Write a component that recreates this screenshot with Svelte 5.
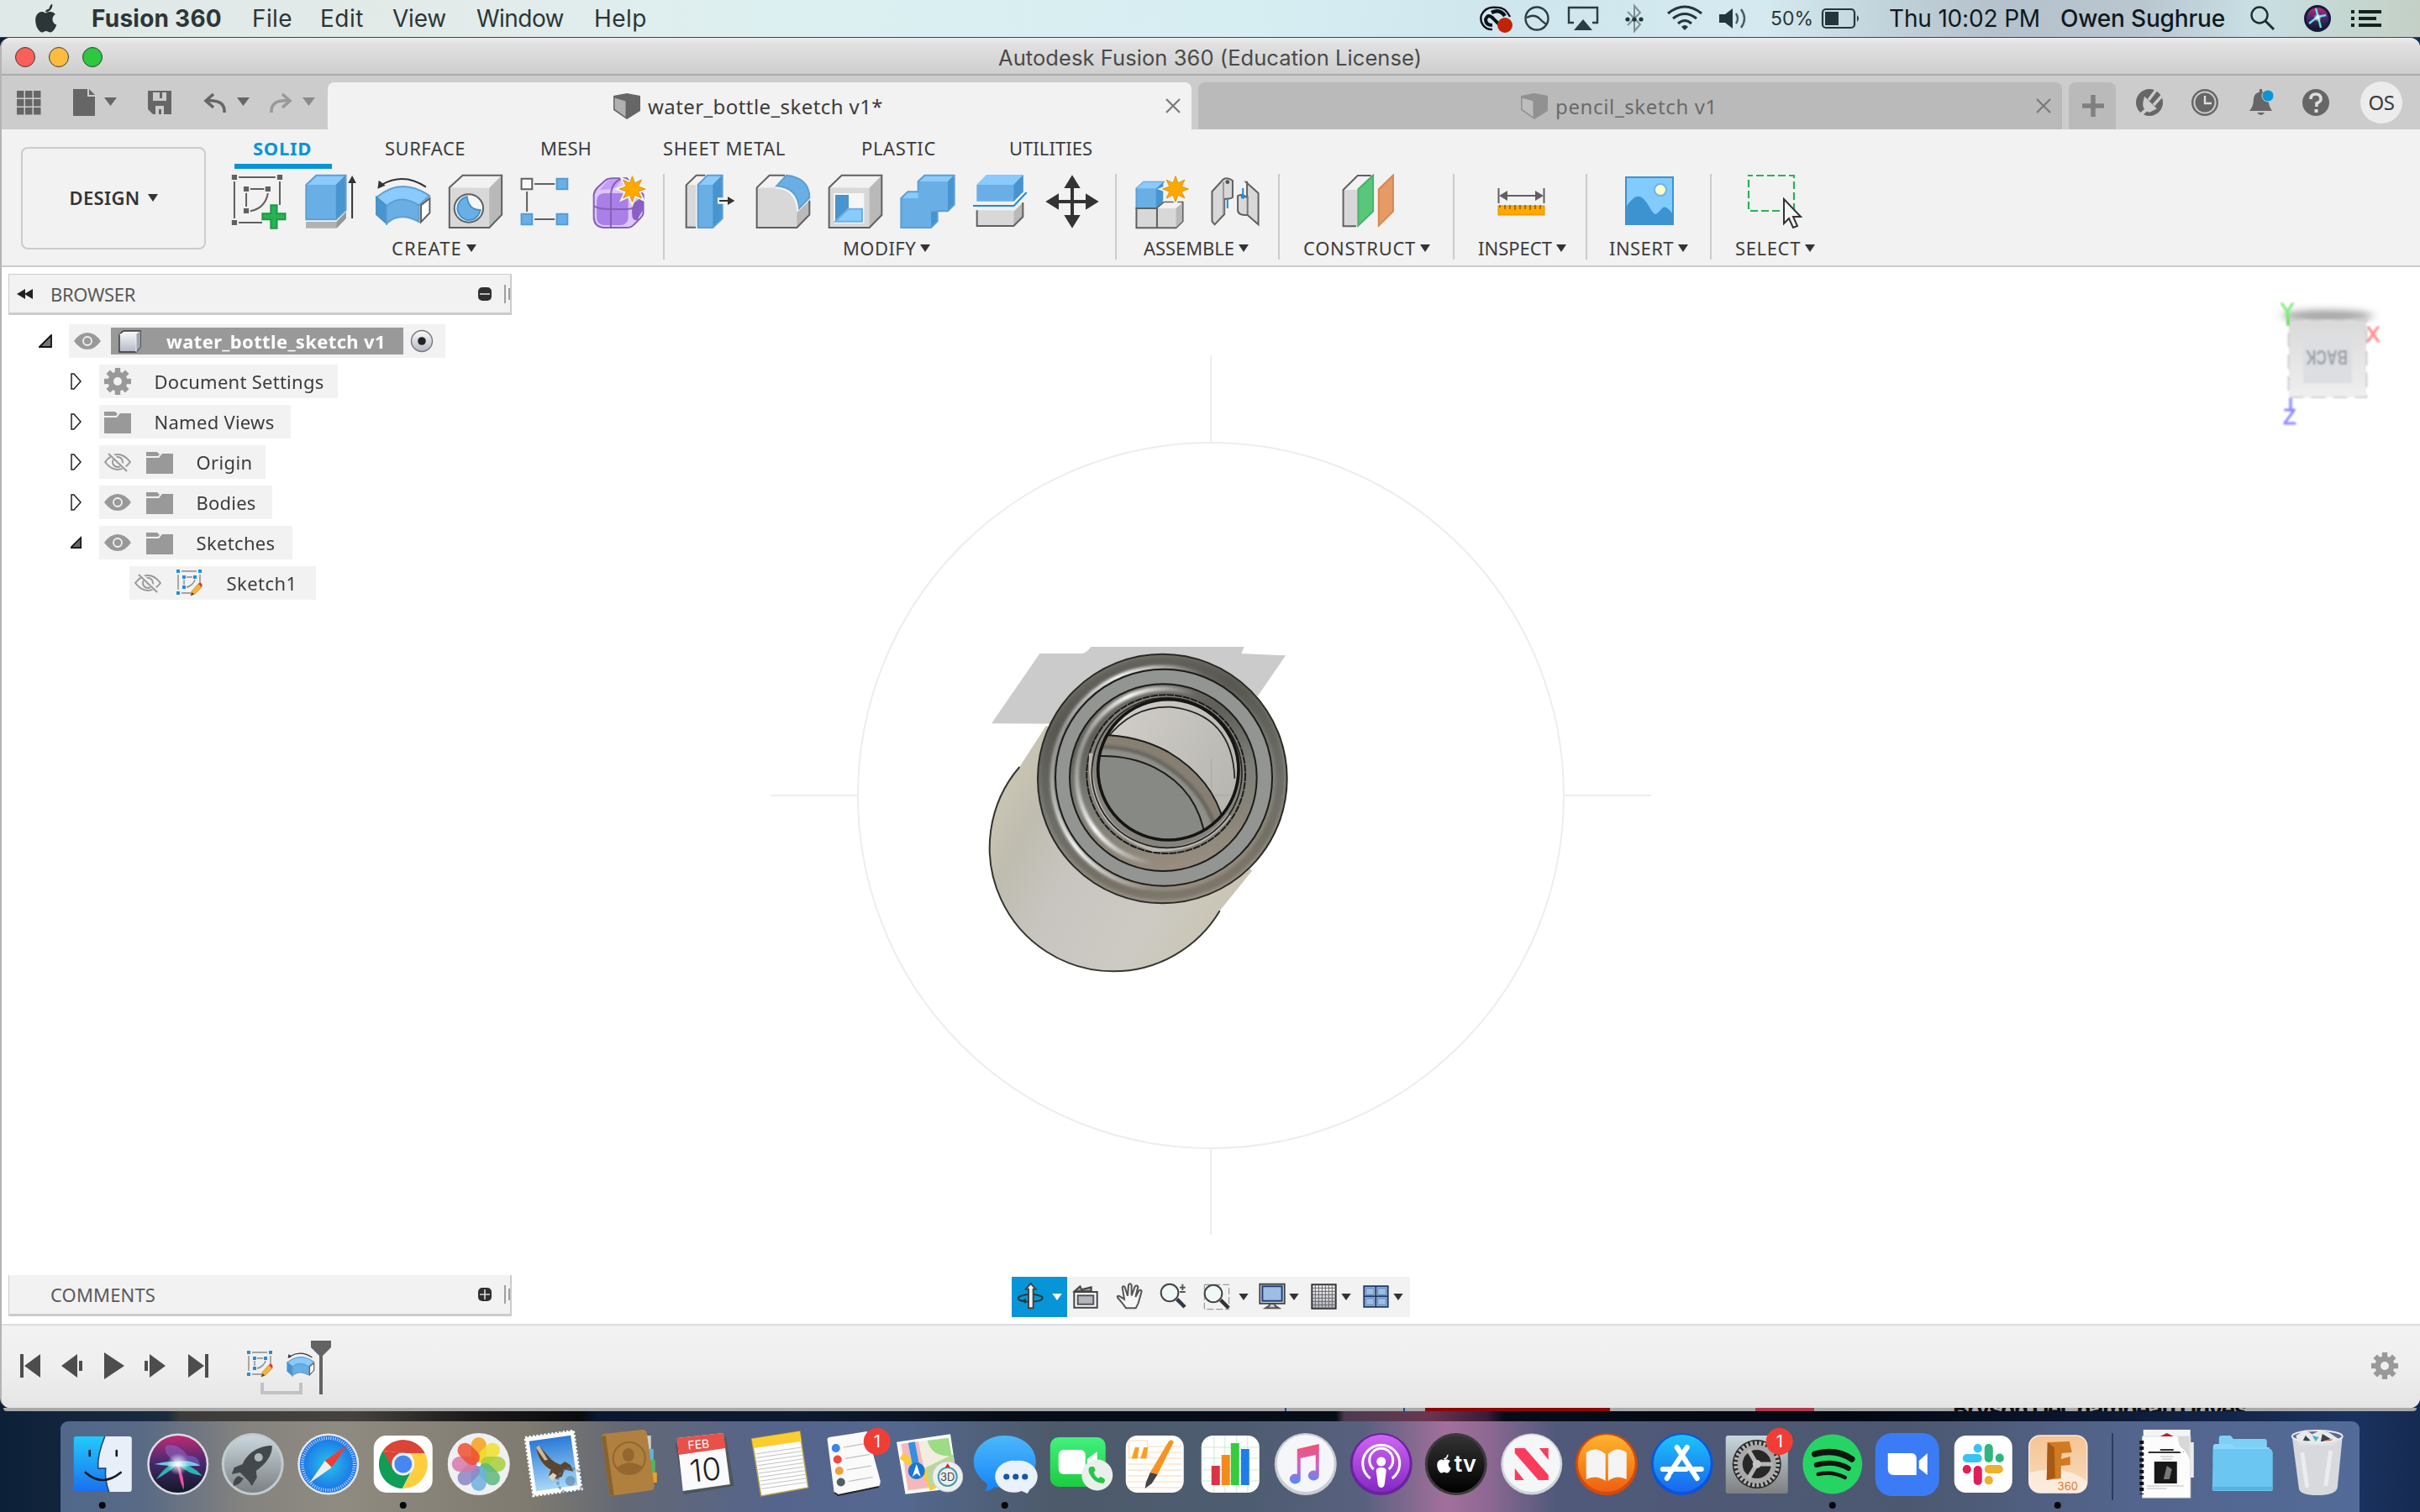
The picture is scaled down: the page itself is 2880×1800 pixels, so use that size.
<script>
  // Spreads letters so that a label takes exactly the given width.
  function fit(node, width) {
    const natural = node.getBoundingClientRect().width;
    node.style.letterSpacing = (width - natural) / node.textContent.length + 'px';
  }

  const menus = [
    { t: 'Fusion 360', gap: 39, w: 155, bold: true },
    { t: 'File', gap: 36, w: 48 },
    { t: 'Edit', gap: 33, w: 52 },
    { t: 'View', gap: 34, w: 64 },
    { t: 'Window', gap: 36, w: 104 },
    { t: 'Help', gap: 36, w: 63 }
  ];

  const ribbonTabs = [
    { t: 'SOLID', gap: 41, w: 70, on: true },
    { t: 'SURFACE', gap: 87, w: 96 },
    { t: 'MESH', gap: 89, w: 61 },
    { t: 'SHEET METAL', gap: 85, w: 146 },
    { t: 'PLASTIC', gap: 90, w: 89 },
    { t: 'UTILITIES', gap: 87, w: 99 }
  ];

  const groups = [
    { t: 'CREATE', x: 260, w: 531, gap: 206, lw: 84 },
    { t: 'MODIFY', x: 791, w: 538, gap: 212, lw: 87 },
    { t: 'ASSEMBLE', x: 1329, w: 194, gap: 32, lw: 108 },
    { t: 'CONSTRUCT', x: 1523, w: 208, gap: 28, lw: 134 },
    { t: 'INSPECT', x: 1731, w: 158, gap: 28, lw: 88 },
    { t: 'INSERT', x: 1889, w: 148, gap: 26, lw: 77 },
    { t: 'SELECT', x: 2037, w: 170, gap: 28, lw: 78 }
  ];

  const tree = [
    { t: 'Document Settings', arrow: 'closed', icons: ['gear'], w: 284, tw: 202 },
    { t: 'Named Views', arrow: 'closed', icons: ['folder'], w: 228, tw: 143 },
    { t: 'Origin', arrow: 'closed', icons: ['off', 'folder'], w: 198, tw: 67 },
    { t: 'Bodies', arrow: 'closed', icons: ['eye', 'folder'], w: 206, tw: 71 },
    { t: 'Sketches', arrow: 'open', icons: ['eye', 'folder'], w: 230, tw: 94 },
    { t: 'Sketch1', arrow: '', icons: ['off', 'sketch'], w: 222, tw: 84 }
  ];

  const apps = ['finder', 'siri', 'launchpad', 'safari', 'chrome', 'photos', 'mail', 'contacts', 'calendar',
    'notes', 'reminders', 'maps', 'messages', 'facetime', 'pages', 'numbers', 'music', 'podcasts', 'tv',
    'news', 'books', 'appstore', 'prefs', 'spotify', 'zoom', 'slack', 'fusion'];
  const running = ['finder', 'chrome', 'messages', 'spotify', 'fusion'];

  const range = (n) => Array.from({ length: n }, (_, i) => i);
  const petals = ['#f7a01c', '#f0e12c', '#a6cf3c', '#5cb87c', '#6cb0e0', '#8b86c4', '#d878a8', '#ee4f30'];
  const star = range(16)
    .map((i) => {
      const r = i % 2 ? 8 : 16;
      const a = (i * Math.PI) / 8;
      return `${(r * Math.sin(a)).toFixed(2)},${(-r * Math.cos(a)).toFixed(2)}`;
    })
    .join(' ');
</script>

{#snippet caret(color)}
  <svg class="caret" width="12" height="9" viewBox="0 0 12 9"><path d="M0 0H12L6 9Z" fill={color} /></svg>
{/snippet}

{#snippet gear(c)}
  <g fill={c}>
    {#each range(8) as i}
      <rect x="-3.2" y="-16" width="6.4" height="8" transform={`rotate(${i * 45})`} />
    {/each}
    <path fill-rule="evenodd" d="M0-11.5A11.5 11.5 0 1 1 0 11.5A11.5 11.5 0 1 1 0-11.5ZM0-5A5 5 0 1 0 0 5A5 5 0 1 0 0-5Z" />
  </g>
{/snippet}

{#snippet starburst(x, y)}
  <g transform={`translate(${x} ${y})`}>
    <polygon points={star} fill="#f2f2f2" stroke="#f2f2f2" stroke-width="4" />
    <polygon points={star} fill="#ffa900" stroke="#dd9100" stroke-width="1" transform="scale(.96)" />
  </g>
{/snippet}

{#snippet sketchArt()}
  <g fill="none" stroke="#8a8a8a" stroke-width="1.400">
    <path d="M2 6V24M6 2H24M28 6V20M6 28H17M12 9H19M9 12V18M12 21C17 20 21 16 22 12" />
  </g>
  <g fill="#1e90e0">
    <rect width="4" height="4" /><rect x="26" width="4" height="4" /><rect y="26" width="4" height="4" />
    <rect x="7" y="7" width="4" height="4" /><rect x="20" y="7" width="4" height="4" /><rect x="7" y="19" width="4" height="4" />
  </g>
  <path d="M18 26L26 17L30 21L22 29L17 31Z" fill="#f6b23c" stroke="#c98a1c" stroke-width=".8" />
  <path d="M26 17C28 14 32 17 30 21Z" fill="#e83030" /><path d="M17 31L18.5 27L21 29.5Z" fill="#444" />
{/snippet}

{#snippet revolveArt()}
  <path d="M575 135Q660 60 758 129L722 163Q660 125 610 166Z" fill="#8acafc" stroke="#5f9fd0" />
  <path d="M575 135L610 166V228L575 196Z" fill="#4794cf" stroke="#4a90c8" />
  <path d="M610 166Q660 120 722 165V222Q655 185 610 228Z" fill="#69afe6" stroke="#5f9fd0" />
  <path d="M729 163L759 138V190L729 223Z" fill="#fff" stroke="#5f5f5f" />
  <path d="M592 90Q670 44 746 98" fill="none" stroke="#333" /><path d="M579 104L583 74L606 92Z" fill="#333" />
{/snippet}

{#snippet createIcons()}
  <g class="hair" transform="translate(250 190) scale(.34439 .33333)">
    <path d="M99 63H226M84 78V210M241 78V162M99 225H180M139 105H187M125 119V168M200 120Q190 174 139 184" fill="none" stroke="#606060" />
    <g fill="#606060">
      <rect x="75" y="54" width="18" height="18" /><rect x="232" y="54" width="18" height="18" /><rect x="75" y="216" width="18" height="18" />
      <rect x="116" y="96" width="18" height="18" /><rect x="191" y="96" width="18" height="18" /><rect x="116" y="174" width="18" height="18" />
    </g>
    <path d="M210 163H231V193H260V214H231V245H210V214H181V193H210Z" fill="#26b354" stroke="#1c9a45" />

    <path d="M331 90L367 55H469V180L435 215H331Z" fill="#69afe6" />
    <path d="M331 90L367 55H469L435 90Z" fill="#8acafc" /><path d="M435 90L469 55V180L435 215Z" fill="#4794cf" />
    <path d="M332 90L367 56H469V180L435 214H332Z" fill="none" stroke="#5c9fd2" />
    <path d="M331 222H437L470 187V210L437 245H331Z" fill="#b2b2b2" /><path d="M437 222L470 187V210L437 245Z" fill="#989898" />
    <path d="M491 80V210" stroke="#333" /><path d="M477 84L491 57L505 84Z" fill="#333" />

    {@render revolveArt()}

    <path d="M827 100L873 56H1008V197L965 243H827Z" fill="#d8d8d8" />
    <path d="M827 100L873 56H1008L965 101Z" fill="#f2f2f2" /><path d="M965 101L1008 56V197L965 243Z" fill="#b9b9b9" />
    <path d="M827 100L873 56H1008V197L965 243H827Z" fill="none" stroke="#606060" />
    <circle cx="894" cy="174" r="50" fill="#f6f6f6" stroke="#606060" />
    <path d="M888 133Q893 180 934 180Q925 216 894 216A42 42 0 0 1 888 133Z" fill="#69afe6" stroke="#4794cf" />

    <path d="M1121 87H1191M1095 114V186M1121 213H1191" stroke="#606060" />
    <rect x="1076" y="68" width="37" height="38" fill="#fafafa" stroke="#606060" />
    <g fill="#69afe6" stroke="#539dd6">
      <rect x="1198" y="68" width="37" height="38" /><rect x="1076" y="194" width="37" height="38" /><rect x="1198" y="194" width="37" height="38" />
    </g>

    <path d="M1326 125Q1328 110 1340 98L1365 75Q1375 67 1390 67H1440L1497 125V190Q1497 200 1488 208L1465 232Q1455 243 1440 243H1360Q1326 240 1326 205Z" fill="#dcc6fa" stroke="#8461b5" />
    <path d="M1347 107L1372 78Q1385 68 1425 68L1400 100Q1390 108 1347 107Z" fill="#c59bfc" />
    <rect x="1336" y="120" width="109" height="114" rx="26" fill="#ab7fe8" />
    <path d="M1458 160L1496 130V180L1475 215Q1458 222 1458 190Z" fill="#8c5fc8" />
    <path d="M1326 165Q1340 177 1385 177H1440Q1470 176 1497 148M1385 243V130Q1385 85 1420 68M1475 217Q1480 190 1475 150" fill="none" stroke="#8461b5" />
  </g>
  {@render starburst(752.5, 225)}
{/snippet}

{#snippet modifyIcons()}
  <g class="hair" transform="translate(800 190) scale(.33333)">
    <path d="M50 242V91L86 56H118L84 91V242Z" fill="#d8d8d8" /><path d="M50 91L86 56H118L84 91Z" fill="#f2f2f2" />
    <path d="M84 242H50V91L86 56H118" fill="none" stroke="#606060" />
    <path d="M91 90L126 55H179V210L145 244H91Z" fill="#69afe6" /><path d="M91 90L126 55H179L145 90Z" fill="#8acafc" />
    <path d="M145 90L179 55V210L145 244Z" fill="#4794cf" /><path d="M92 90L126 56H179V210L145 243H92Z" fill="none" stroke="#5c9fd2" />
    <path d="M162 136H195V158H162Z" fill="#f2f2f2" /><path d="M168 147H202" stroke="#333" /><path d="M198 132L223 147L198 162Z" fill="#333" />

    <path d="M302 100H375Q440 110 447 190L445 243H302Z" fill="#d8d8d8" /><path d="M302 100L347 56H405L372 100Z" fill="#f2f2f2" />
    <path d="M445 190L490 146V197L445 243Z" fill="#b9b9b9" />
    <path d="M402 56H347L302 100V243H445L490 197V146" fill="none" stroke="#606060" />
    <path d="M372 95L408 56Q490 65 490 136L452 175Q450 100 372 95Z" fill="#69afe6" stroke="#5c9fd2" />
    <path d="M368 100Q444 104 448 182" fill="none" stroke="#f6f6f6" />

    <path d="M560 100L605 56H748V198L704 243H560Z" fill="#d8d8d8" /><path d="M560 100L605 56H748L704 101Z" fill="#f2f2f2" />
    <path d="M704 101L748 56V198L704 243Z" fill="#b9b9b9" /><path d="M560 100L605 56H748V198L704 243H560Z" fill="none" stroke="#606060" />
    <path d="M576 120H685V228H576Z" fill="#f6f6f6" /><path d="M582 126H630V174L582 221Z" fill="#4794cf" />
    <path d="M582 221L628 176H678V221Z" fill="#8acafc" stroke="#69afe6" />

    <path d="M817 138L841 115H878V78L901 55H1007V161L984 185H947V220L924 244H817Z" fill="#69afe6" />
    <path d="M817 138L841 115H878V138ZM878 78L901 55H1007L984 78Z" fill="#8acafc" />
    <path d="M984 78L1007 55V161L984 185ZM924 185H947V220L924 244Z" fill="#4794cf" />
    <path d="M817 138L841 115H878V78L901 56H1007V161L984 184H947V220L924 243H817Z" fill="none" stroke="#5c9fd2" />

    <path d="M1087 90L1122 55H1253V115L1219 149H1087Z" fill="#69afe6" /><path d="M1087 90L1122 55H1253L1219 90Z" fill="#8acafc" />
    <path d="M1219 90L1253 55V115L1219 149Z" fill="#4794cf" />
    <path d="M1088 181H1219V237H1088Z" fill="#d8d8d8" /><path d="M1219 185L1252 153V204L1219 237Z" fill="#b9b9b9" />
    <path d="M1088 181V237H1219L1252 204V153" fill="none" stroke="#606060" />
    <path d="M1074 165H1220L1265 117" fill="none" stroke="#178be0" />

    <path d="M1422 95H1434V144H1482V156H1434V205H1422V156H1374V144H1422Z" fill="#333" />
    <path d="M1399 102L1428 55L1457 102ZM1399 198L1428 245L1457 198ZM1380 121L1333 150L1380 179ZM1476 121L1523 150L1476 179Z" fill="#333" />
  </g>
{/snippet}

{#snippet assembleIcons()}
  <g class="hair" transform="translate(960 0) scale(.61224 .33333)">
    <path d="M641 744V673L655 650H693L680 673V744Z" fill="#69afe6" stroke="#5c9fd2" /><path d="M641 673L655 650H693L680 673Z" fill="#8acafc" />
    <path d="M680 673L693 650V720L680 744Z" fill="#4794cf" />
    <path d="M641 744H681V814H641ZM681 744L694 722H731V790L718 814H681Z" fill="#d8d8d8" stroke="#606060" />
    <path d="M682 744L695 724H730L718 744Z" fill="#f2f2f2" /><path d="M718 744L730 726V790L718 812Z" fill="#b9b9b9" />

    <path d="M788 684L810 640Q818 632 828 645V705Q822 712 812 710V765L793 802L788 790Z" fill="#d8d8d8" stroke="#606060" />
    <path d="M810 650V765" stroke="#9a9a9a" /><ellipse cx="818" cy="650" rx="4" ry="7" fill="#555" />
    <path d="M854 650L878 690V802L857 768Q838 770 838 750V700Q844 690 856 705V650Z" fill="#d8d8d8" stroke="#606060" />
    <path d="M857 700V765" stroke="#777" /><path d="M818 712V744M848 672V704" stroke="#178be0" /><ellipse cx="848" cy="703" rx="4" ry="7" fill="#178be0" />
  </g>
  {@render starburst(1399, 225)}
{/snippet}

{#snippet constructIcons()}
  <g class="hair" transform="translate(960 0) scale(.61224 .33333)">
    <path d="M1043 678L1071 627H1098L1070 678V808H1043Z" fill="#f2f2f2" /><path d="M1043 678H1070V808H1043Z" fill="#d8d8d8" />
    <path d="M1068 808H1043V678L1071 627H1097" fill="none" stroke="#606060" />
    <path d="M1072 676L1101 626V755L1072 806Z" fill="#5ac67c" stroke="#46b268" />
    <path d="M1112 676L1140 626V755L1112 806Z" fill="#e69a66" stroke="#d88652" />
  </g>
{/snippet}

{#snippet inspectIcons()}
  <path d="M1783.500 224V242M1837.500 224V242M1788 233H1833" stroke="#606060" stroke-width="2" />
  <path d="M1784 233L1794 227V239ZM1837 233L1827 227V239Z" fill="#606060" />
  <rect x="1783" y="245" width="55" height="11" fill="#ffa900" stroke="#dd9100" />
  <path d="M1785 244V247M1791 244V249M1797 244V249M1803 244V250M1809 244V249M1815 244V249M1821 244V250M1827 244V249M1833 244V249" stroke="#7a5a10" stroke-width="1.400" />
{/snippet}

{#snippet insertIcons()}
  <rect x="1935" y="211" width="56" height="56" fill="#82cbff" stroke="#3d93cf" stroke-width="2" />
  <circle cx="1976" cy="226" r="7" fill="#ffffc8" stroke="#6db4ea" stroke-width="2" />
  <path d="M1934 248C1942 236 1948 230 1955 236C1962 242 1966 254 1970 255C1975 254 1978 244 1983 247C1988 250 1990 254 1992 257V268H1934Z" fill="#3d93cf" />
{/snippet}

{#snippet selectIcons()}
  <rect x="2081" y="209" width="54" height="42" fill="none" stroke="#26b354" stroke-width="2.200" stroke-dasharray="9 4" stroke-dashoffset="4" />
  <path d="M2123 237V266L2129 260L2134 271L2139 269L2134 258H2143Z" fill="#f6f6f6" stroke="#333" stroke-width="2" />
{/snippet}

{#snippet cubeTab(edge, light, dark)}
  <svg class="tab-cube" width="32" height="31" viewBox="0 0 32 31">
    <path d="M0 3L16 0L32 3V21L16 31L0 20Z" fill={dark} /><path d="M1 5L15 9V29L1 19Z" fill={light} stroke={edge} />
  </svg>
{/snippet}

{#snippet rowIcon(kind)}
  <svg class="row-icon" width="32" height="32" viewBox="0 0 32 32">
    {#if kind === 'gear'}
      <g transform="translate(16 16)">{@render gear('#999')}</g>
    {:else if kind === 'folder'}
      <path d="M0 4H13L16 7L14 9H0Z" fill="#999" /><path d="M0 11H15L19 6H32V30H0Z" fill="#999" />
    {:else if kind === 'eye'}
      <path d="M0 16Q7 6 16 6T32 16Q25 26 16 26T0 16Z" fill="#999" /><circle cx="16" cy="16" r="5" fill="none" stroke="#f2f2f2" stroke-width="1.800" />
    {:else if kind === 'off'}
      <path d="M1 16Q8 7 16 7T31 16Q24 25 16 25T1 16Z" fill="none" stroke="#999" stroke-width="2" /><circle cx="16" cy="16" r="6" fill="none" stroke="#999" stroke-width="2" /><circle cx="16" cy="16" r="2" fill="#999" />
      <path d="M6 5L28 27" stroke="#f2f2f2" stroke-width="5" /><path d="M5 6L27 27" stroke="#999" stroke-width="2" />
    {:else}
      {@render sketchArt()}
    {/if}
  </svg>
{/snippet}

{#snippet app(name)}
  {#if name === 'finder'}
    <rect x="-34" y="-33" width="69" height="66" rx="3" fill="url(#finder)" />
    <path d="M3-33C-3-18-6-5-5 5H4C3 15 5 25 8 33H32Q35 33 35 30V-30Q35-33 32-33Z" fill="#e9eff8" />
    <path d="M3-33C-3-18-6-5-5 5H4C3 15 5 25 8 33" fill="none" stroke="#1a3f78" stroke-width="1.500" />
    <path d="M-15-16V-10M17-16V-10" stroke="#151a22" stroke-width="2.600" stroke-linecap="round" />
    <path d="M-20 10Q0 28 22 10" fill="none" stroke="#151a22" stroke-width="2.600" stroke-linecap="round" />
  {:else if name === 'siri'}
    <circle r="36.500" fill="#dcdde2" /><circle r="34" fill="url(#siri)" />
    <path d="M0 0Q-10-4-26 18Q-14 12 0 0ZM0 0Q14-2 29 14Q12 12 0 0Z" fill="#2ad8c8" opacity=".8" />
    <path d="M0 0Q-20-14-14-22Q0-26 12-10Q26-10 26 2Q14-4 0 0Z" fill="#8a70d8" opacity=".5" />
    <path d="M0 0Q8 14 7 31Q0 16 0 0Z" fill="#ff5ab0" opacity=".9" /><path d="M-28 0Q-10-4 0-3Q14-6 27 2Q12 2 0 3Q-12 2-28 0Z" fill="#7ff0f8" opacity=".8" /><circle r="13" fill="url(#glow)" />
  {:else if name === 'launchpad'}
    <circle r="37" fill="#c2cacd" /><circle r="34" fill="url(#launch)" />
    <path d="M23-22C6-22-7-12-12 0L-22 4L-25 12L-15 10L-5 20L-1 26L5 16L4 8C16 0 24-12 23-22Z" fill="#43484c" /><circle cx="7" cy="-8" r="5" fill="#aeb8bc" /><path d="M-17 14Q-24 18-23 26Q-14 24-11 17Z" fill="#43484c" />
  {:else if name === 'safari'}
    <circle r="36.500" fill="#e6e8ea" /><circle r="34" fill="url(#safari)" /><circle r="31" fill="none" stroke="#e8f8ff" stroke-width="4" stroke-dasharray="1 1.700" opacity=".8" />
    <path d="M23-23L4 4L-4-4Z" fill="#f03c32" /><path d="M-23 23L4 4L-4-4Z" fill="#eee" />
  {:else if name === 'chrome'}
    <rect x="-35" y="-34" width="70" height="68" rx="15" fill="#fff" />
    <path d="M-24-16A29 29 0 0 1 26-13L0-13Z" fill="#db4437" /><path d="M-24-16A29 29 0 0 0-1 29L11 6L-9 8Z" fill="#0f9d58" /><path d="M26-13A29 29 0 0 1-1 29L12 6Q16-4 8-13Z" fill="#ffcd40" />
    <path d="M-24-16L-12 7L0-13Z" fill="#db4437" /><circle r="13.500" fill="#f1f1f1" /><circle r="10.500" fill="#4688f1" />
  {:else if name === 'photos'}
    <circle r="37" fill="#eef0f2" />
    {#each petals as p, i}<rect x="-9" y="-32" width="18" height="30" rx="9" fill={p} opacity=".85" transform={`rotate(${i * 45})`} />{/each}
    <circle r="2.500" fill="#fff" />
  {:else if name === 'mail'}
    <g transform="rotate(-8)"><rect x="-29" y="-36" width="58" height="70" fill="#fff" stroke="#fff" stroke-width="3" stroke-dasharray="2.500 2" /><rect x="-25" y="-31" width="50" height="60" fill="url(#mailsky)" />
      <path d="M-18-22L-14-25L-10-18L-2-6L2-2L8 2L14-1L20 4L22 12L12 8L8 16L0 18L-2 12L-8 14L-4 6Q-16-2-18-22Z" fill="#5a4530" /><path d="M-18-22L-14-25L-6-6L-10-6Z" fill="#c9b89a" /><path d="M-8 14L-2 10L2 14L-4 20Z" fill="#e0d4b8" /></g>
    <circle cx="20" cy="20" r="15" fill="none" stroke="#4d6e92" stroke-width="3" opacity=".5" stroke-dasharray="4 2" /><circle cx="20" cy="20" r="6" fill="#4d6e92" opacity=".5" />
  {:else if name === 'contacts'}
    <path d="M20-34L26-34V-18H20Z" fill="#cfcfcf" /><path d="M20-18H29V-5H20Z" fill="#58b8dc" /><path d="M20-5H31V10H20Z" fill="#52b466" /><path d="M20 10H33V22H20Z" fill="#f0a028" />
    <path d="M-33-33Q-33-35-30-36L16-41Q20-41 21-37L30 26Q30 30 27 31L-23 38Z" fill="#b0803f" /><path d="M-33-33L-28-34L-18 37L-23 38Z" fill="#8a6230" />
    <circle cx="0" cy="-7" r="19" fill="none" stroke="#93672f" stroke-width="2" /><ellipse cx="-1" cy="-11" rx="7" ry="8" fill="#93672f" /><path d="M-16 5Q0-8 17 4Q2 18-16 5Z" fill="#93672f" />
  {:else if name === 'calendar'}
    <path d="M-34-25L26-33L36 26L-24 36Z" fill="#4d565c" /><path d="M-32-31L23-37L31 24L-25 32Z" fill="#fafafa" /><path d="M-32-31L23-37L26-19L-30-11Z" fill="#e8504a" />
    <text x="-4" y="-19" class="a mid" font-size="14" fill="#fff" transform="rotate(-6)">FEB</text><text x="1" y="20" class="a mid" font-size="37" font-weight="300" fill="#222" transform="rotate(-6)">10</text>
  {:else if name === 'notes'}
    <path d="M-33-30L24-39L34 28L-22 38Z" fill="#fdfdfd" stroke="#b8a24a" stroke-width="1.500" /><path d="M-33-30L24-39L26-27L-31-19Z" fill="#fccd2e" />
    {#each range(10) as i}<path d={`M${-29 + i * 0.8} ${-12 + i * 4.6}L${26 + i * 0.8} ${-20 + i * 4.6}`} stroke="#c4c4c4" stroke-width="1" />{/each}
  {:else if name === 'reminders'}
    <path d="M-32-28Q-33-31-30-32L15-39L31 20Q31 26 27 28L-19 37Q-23 37-24 34Z" fill="#fafafa" /><path d="M-24 34L-19 37L29 27" stroke="#222" stroke-width="2" fill="none" />
    {#each ['#3c82f0', '#f04a3c', '#f0a040', '#555c66'] as c, i}<circle cx={-22 + i * 2} cy={-19 + i * 13.5} r="5" fill={c} /><path d={`M${-13 + i * 2} ${-20 + i * 13.5}L${16 + i * 2} ${-25 + i * 13.5}`} stroke="#bbb" stroke-width="1.200" />{/each}
    <circle cx="27" cy="-27" r="16" fill="#f23d37" /><text x="27" y="-20" class="a mid" font-size="20" fill="#fff">1</text>
  {:else if name === 'maps'}
    <path d="M-38-25L23-34L32 27L-28 34Z" fill="#f2ede0" stroke="#fff" stroke-width="3" /><path d="M-34-24L-14-27L-2 28L-26 31Z" fill="#f4b8bc" /><path d="M-3-28L22-31L26-10Q2-8-3-28Z" fill="#9cdc84" />
    <path d="M-34-10L-5 10L4 30" stroke="#fccb38" stroke-width="8" fill="none" /><path d="M-5 4L28-12L30 8L0 28Z" fill="#b8d89a" /><path d="M-22-26L-16 5" stroke="#3490e0" stroke-width="8" />
    <circle cx="-16" cy="8" r="10" fill="#1478d8" /><path d="M-16 0L-11 15L-16 11L-21 15Z" fill="#fff" />
    <circle cx="21" cy="15" r="18" fill="#eceff0" stroke="#c8cccf" /><circle cx="21" cy="15" r="11" fill="none" stroke="#4c98ac" stroke-width="2" /><text x="21" y="20" class="a mid" font-size="13" fill="#444">3D</text><path d="M21-1L24 4H18Z" fill="#e02020" />
  {:else if name === 'messages'}
    <path d="M0-34C20-34 37-21 37-3S20 28 0 28Q-8 28-12 27Q-16 32-24 32Q-20 27-21 23C-31 17-37 7-37-3C-37-21-20-34 0-34Z" fill="url(#msg)" />
    <path d="M13-4A22 19 0 0 1 30 30L27 35L20 32A22 19 0 1 1 13-4Z" fill="#e9f1fa" /><g fill="#1756a4"><circle cx="2" cy="15" r="3.600" /><circle cx="13" cy="15" r="3.600" /><circle cx="24" cy="15" r="3.600" /></g>
  {:else if name === 'facetime'}
    <rect x="-36" y="-32" width="66" height="59" rx="10" fill="url(#green)" /><rect x="-26" y="-17" width="32" height="29" rx="6" fill="#fff" /><path d="M8-6L20-15V10L8 2Z" fill="#fff" />
    <circle cx="20" cy="13" r="18.500" fill="#e9f0ea" /><path d="M12 3Q8 5 11 12Q17 23 27 23Q31 20 28 17L24 15L21 17Q17 14 16 10L18 7L16 3Z" fill="#22c84a" />
  {:else if name === 'pages'}
    <rect x="-35" y="-34" width="69" height="68" rx="14" fill="#fff" />{#each range(8) as i}<path d={`M-33 ${-21 + i * 7}H32`} stroke="#f8d9b4" stroke-width="1.200" />{/each}
    <rect x="-31" y="-28" width="22" height="20" fill="#fff" stroke="#f8d9b4" /><text x="-19" y="11" class="a mid" font-size="42" font-weight="800" fill="#f6a11c">“</text>
    <path d="M16-27Q20-31 22-26L3 12L-6 10Z" fill="#f79421" /><path d="M-6 10L3 12L-4 23L-12 29L-11 22Z" fill="#444" />
  {:else if name === 'numbers'}
    <rect x="-35" y="-34" width="69" height="68" rx="14" fill="#fff" /><path d="M-20-34V34M-7-34V34M7-34V34M20-34V34M-35-20H34M-35-7H34M-35 7H34M-35 20H34" stroke="#c5efcb" />
    <rect x="-23" y="2" width="10" height="23" fill="#dc3346" /><rect x="-11" y="-11" width="10" height="36" fill="#f58a1c" /><rect x="0" y="-25" width="10" height="50" fill="#36cc3c" /><rect x="12" y="-18" width="10" height="43" fill="#1e7ee8" />
  {:else if name === 'music'}
    <circle r="37" fill="#c9cdd4" /><circle cy="-1" r="34" fill="#f5f6fa" /><path d="M-10-18L16-24V13A6.500 6 0 1 1 12 8V-11L-6-7V17A6.500 6 0 1 1-10 12Z" fill="url(#music)" />
  {:else if name === 'podcasts'}
    <circle r="37" fill="#6b22a0" /><circle cy="-1" r="34" fill="url(#pod)" /><g fill="none" stroke="#fff" stroke-width="3"><path d="M-13 17A22 22 0 1 1 13 17" /><path d="M-9 6A14 14 0 1 1 9 6" /></g><circle cy="-3" r="5.500" fill="#fff" /><path d="M-6 8Q-6 4 0 4T6 8L4 24Q3 28 0 28T-4 24Z" fill="#fff" />
  {:else if name === 'tv'}
    <circle r="37" fill="#3c3c3c" /><circle r="34" fill="url(#tv)" /><g transform="translate(-14 -1) scale(.66)">{@render appleMark('#fff')}</g><text x="-2" y="9" class="a" font-size="27" font-weight="600" fill="#fff" textLength="26">tv</text>
  {:else if name === 'news'}
    <circle r="36.500" fill="#cfd5da" /><circle cy="-1" r="34" fill="#f4f6f8" /><path d="M-20-19H-8L20 13V19H8L-20-13ZM9-19H20V-5ZM-20 5V19H-9Z" fill="#fa3c5c" />
  {:else if name === 'books'}
    <circle r="37" fill="#d34a0c" /><circle cy="-1" r="34" fill="url(#books)" /><path d="M-1-12Q-12-22-24-14V18Q-12 12-1 20ZM2-12Q12-22 24-14V18Q12 12 2 20Z" fill="#f4f4f4" />
  {:else if name === 'appstore'}
    <circle r="37" fill="#0b55d8" /><circle cy="-1" r="34" fill="url(#store)" /><path d="M-6-20L18 17M6-20L-14 10M-16 14L-18 17M-23 6H5M15 6H23" stroke="#fff" stroke-width="6" stroke-linecap="round" />
  {:else if name === 'prefs'}
    <rect x="-37" y="-34" width="74" height="69" rx="3" fill="url(#launch)" /><circle r="29" fill="#282828" /><circle r="25" fill="none" stroke="#b4b4b4" stroke-width="5" stroke-dasharray="3 2.200" /><circle r="20" fill="none" stroke="#a8a8a8" stroke-width="6" /><path d="M0 0L19 0M0 0L-10-17M0 0L-10 17" stroke="#b6b6b6" stroke-width="5" /><circle r="5" fill="#c4c4c4" />
    <circle cx="27" cy="-27" r="16" fill="#f23d37" /><text x="27" y="-20" class="a mid" font-size="20" fill="#fff">1</text>
  {:else if name === 'spotify'}
    <circle r="35.500" fill="#26d464" /><g fill="none" stroke="#101510" stroke-linecap="round"><path d="M-21-12Q4-19 23-6" stroke-width="7.500" /><path d="M-19 1Q2-5 19 5" stroke-width="6" /><path d="M-17 12Q0 8 15 16" stroke-width="4.500" /></g>
  {:else if name === 'zoom'}
    <rect x="-38" y="-37" width="76" height="75" rx="20" fill="#3b7cf6" /><path d="M-23-13H5Q11-13 11-6V13H-16Q-23 13-23 6Z" fill="#fff" /><path d="M14-4L24-13V13L14 5Z" fill="#fff" />
  {:else if name === 'slack'}
    <rect x="-34" y="-34" width="69" height="68" rx="14" fill="#fff" /><g stroke-width="10" stroke-linecap="round">
      <path d="M-19-7H-6" stroke="#38c4f0" /><path d="M7-19V-7" stroke="#2eb67d" /><path d="M7 6H19" stroke="#ecb22e" /><path d="M-6 7V20" stroke="#e01e5a" />
      <path d="M-6-18.500V-19" stroke="#38c4f0" /><path d="M20-7V-7.500" stroke="#2eb67d" /><path d="M7 19V19.500" stroke="#ecb22e" /><path d="M-19 6V6.500" stroke="#e01e5a" /></g>
  {:else if name === 'fusion'}
    <rect x="-34" y="-34" width="69" height="68" rx="13" fill="url(#fus)" stroke="#fbeada" stroke-width="1.500" /><path d="M-34 10Q10 0 34 20V28Q30 34 20 34H-20Q-34 32-34 20Z" fill="#fdf1e6" opacity=".75" />
    <path d="M-12-26L14-27L17-14L5-13L4-6L15-9V1L4 2V17L-13 19Z" fill="#d07a24" /><path d="M-12-26L-4-20L-3 16L-13 19Z" fill="#a85a14" /><text x="12" y="31" class="a mid" font-size="13" fill="#d8782c">360</text>
  {/if}
{/snippet}

{#snippet appleMark(c)}
  <path d="M6-17Q7-23 11-25Q12-19 8-15T0-12Q-1-15 6-17ZM0-10Q4-13 9-12Q14-11 16-8Q10-4 12 3Q13 7 18 9Q13 21 8 21Q5 21 2 19Q-1 19-4 21Q-9 22-14 12Q-18 0-14-7Q-10-13-4-12Z" transform="translate(-1 2) scale(.74)" fill={c} />
{/snippet}

<svg class="defs" width="0" height="0">
  <defs>
    <linearGradient id="finder" x2="0" y2="1"><stop stop-color="#22cbfa" /><stop offset="1" stop-color="#1b6ff0" /></linearGradient>
    <linearGradient id="siri" x2="0" y2="1"><stop stop-color="#c02a72" /><stop offset=".45" stop-color="#4a2a70" /><stop offset="1" stop-color="#101828" /></linearGradient>
    <radialGradient id="glow"><stop stop-color="#fff" /><stop offset="1" stop-color="#fff" stop-opacity="0" /></radialGradient>
    <linearGradient id="launch" x2="0" y2="1"><stop stop-color="#c9d7dd" /><stop offset="1" stop-color="#7c8082" /></linearGradient>
    <radialGradient id="safari"><stop stop-color="#28c4ec" /><stop offset="1" stop-color="#1b6fe6" /></radialGradient>
    <linearGradient id="mailsky" x2="0" y2="1"><stop stop-color="#2a7ad8" /><stop offset="1" stop-color="#a8d8f6" /></linearGradient>
    <linearGradient id="msg" x2="0" y2="1"><stop stop-color="#4cb8fa" /><stop offset="1" stop-color="#1584fa" /></linearGradient>
    <linearGradient id="green" x2="0" y2="1"><stop stop-color="#42f07e" /><stop offset="1" stop-color="#1ccc40" /></linearGradient>
    <linearGradient id="music" x2="0" y2="1"><stop stop-color="#f0506c" /><stop offset=".5" stop-color="#d860c0" /><stop offset="1" stop-color="#4f8cfa" /></linearGradient>
    <linearGradient id="pod" x2="0" y2="1"><stop stop-color="#cf66f2" /><stop offset="1" stop-color="#8428c4" /></linearGradient>
    <linearGradient id="tv" x2="0" y2="1"><stop stop-color="#333" /><stop offset="1" stop-color="#000" /></linearGradient>
    <linearGradient id="books" x2="0" y2="1"><stop stop-color="#fdb42c" /><stop offset="1" stop-color="#ee6010" /></linearGradient>
    <linearGradient id="store" x2="0" y2="1"><stop stop-color="#1cc4fa" /><stop offset="1" stop-color="#1a66f0" /></linearGradient>
    <linearGradient id="fus" x2="0" y2="1"><stop stop-color="#f6c493" /><stop offset="1" stop-color="#f8dcc0" /></linearGradient>
    <linearGradient id="steel" x2="0" y2="1"><stop stop-color="#fbfbfc" /><stop offset="1" stop-color="#b4b8c6" /></linearGradient>
    <linearGradient id="body" gradientUnits="userSpaceOnUse" x1="70" y1="640" x2="930" y2="1090"><stop stop-color="#c9c6b4" /><stop offset=".16" stop-color="#bfbcb0" /><stop offset=".36" stop-color="#c8c5c0" /><stop offset=".7" stop-color="#cccac3" /><stop offset="1" stop-color="#c9c3b0" /></linearGradient>
    <linearGradient id="lip" x1=".2" y1="0" x2=".45" y2="1"><stop stop-color="#77756f" /><stop offset=".25" stop-color="#5f5e58" /><stop offset=".6" stop-color="#7d7f79" /><stop offset=".85" stop-color="#8b8579" /><stop offset="1" stop-color="#978d80" /></linearGradient>
    <linearGradient id="shine" x1="0" y1=".2" x2=".8" y2=".4"><stop stop-color="#eee" stop-opacity=".2" /><stop offset=".3" stop-color="#fff" /><stop offset=".75" stop-color="#eee" stop-opacity="0" /></linearGradient>
    <linearGradient id="wall" x2="1" y2=".6"><stop stop-color="#d4d1cc" /><stop offset="1" stop-color="#b8b6b0" /></linearGradient>
    <linearGradient id="cubeface" x2="0" y2="1"><stop stop-color="#dadada" /><stop offset="1" stop-color="#efefef" /></linearGradient>
    <filter id="soft"><feGaussianBlur stdDeviation="5" /></filter>
    <filter id="haze" x="-20%" y="-200%" width="140%" height="500%"><feGaussianBlur stdDeviation="6 4" /></filter>
    <filter id="soft1"><feGaussianBlur stdDeviation=".8" /></filter>
    <clipPath id="hole"><circle cx="691" cy="529" r="250" /></clipPath>
  </defs>
</svg>

<div class="desktop">
  <header class="menubar">
    <svg class="apple" width="30" height="44" viewBox="40 0 30 44"><g transform="translate(55 21)">{@render appleMark('#2c3638')}</g></svg>
    {#each menus as m}<span class="menu" class:bold={m.bold} style:margin-left={m.gap + 'px'} use:fit={m.w}>{m.t}</span>{/each}
    <svg class="status" width="350" height="44" viewBox="1750 0 350 44">
      <g fill="none" stroke="#0a1216" stroke-width="2.400">
        <path d="M1776 35A13 13 0 0 1 1763 18Q1768 7 1781 9Q1791 8 1797 20" /><path d="M1776 30Q1768 30 1768 23Q1771 16 1776 21L1784 29" stroke-width="4" /><path d="M1775 15Q1785 10 1791 19" stroke-width="4.500" />
      </g>
      <circle cx="1791" cy="30" r="9" fill="#c22402" />
      <g fill="none" stroke="#2b3c42" stroke-width="2.400"><circle cx="1829" cy="22" r="13.500" /><path d="M1817 21Q1826 16 1832 22T1841 29" />
        <path d="M1873 27H1867V9H1901V27H1895" /></g>
      <path d="M1884 23L1895 36H1873Z" fill="#2b3c42" />
      <path d="M1937 14L1952 29L1945 37V7L1952 15L1937 30" fill="none" stroke="#7f9094" stroke-width="2" /><g fill="#22343a"><circle cx="1937" cy="23" r="2.600" /><circle cx="1945" cy="23" r="2.600" /><circle cx="1953" cy="23" r="2.600" /></g>
      <g fill="none" stroke="#23363c" stroke-width="3"><path d="M1985 16Q2005 0 2025 16" /><path d="M1991 22Q2005 11 2019 22" /><path d="M1997 28Q2005 21 2013 28" /></g><path d="M2001 32Q2005 28 2009 32L2005 36Z" fill="#23363c" />
      <path d="M2046 17H2053L2062 10V34L2053 27H2046Z" fill="#23363c" /><path d="M2066 16Q2070 22 2066 28M2072 11Q2080 22 2072 33" fill="none" stroke="#4a5c62" stroke-width="2.400" />
    </svg>
    <span class="pct" use:fit={51}>50%</span>
    <svg class="battery" width="60" height="44" viewBox="2160 0 60 44"><rect x="2169" y="11" width="38" height="22" rx="4" fill="none" stroke="#23363c" stroke-width="2.200" /><rect x="2172" y="14" width="16" height="16" fill="#23363c" /><path d="M2210 18Q2214 22 2210 26Z" fill="#23363c" /></svg>
    <span class="clock" use:fit={180}>Thu 10:02 PM</span>
    <span class="user" use:fit={196}>Owen Sughrue</span>
    <svg class="tools" width="170" height="44" viewBox="2670 0 170 44">
      <circle cx="2689" cy="18" r="9.500" fill="none" stroke="#1f2d30" stroke-width="2.400" /><path d="M2696 25L2706 35" stroke="#1f2d30" stroke-width="3" />
      <circle cx="2758" cy="22" r="16" fill="#141a3c" /><circle cx="2758" cy="22" r="13" fill="url(#siri)" /><path d="M2748 28L2758 20L2768 18M2756 10L2759 21L2762 33" stroke="#60e8e8" stroke-width="2.400" fill="none" /><circle cx="2758" cy="21" r="5" fill="url(#glow)" />
      <path d="M2798 14H2802M2798 22H2802M2798 30H2802M2807 14H2834M2807 22H2828M2807 30H2834" stroke="#15231f" stroke-width="4" />
    </svg>
  </header>

  <main class="window">
    <div class="titlebar">
      <div class="lights"><i class="red"></i><i class="amber"></i><i class="green"></i></div>
      <span class="title" use:fit={504}>Autodesk Fusion 360 (Education License)</span>
    </div>

    <div class="tabbar">
      <svg width="390" height="64" viewBox="0 90 390 64">
        {#each range(9) as i}<rect x={20 + (i % 3) * 10} y={108 + Math.floor(i / 3) * 10} width="8.500" height="8.500" fill="#666" />{/each}
        <path d="M87 106H104V115H113V138H87Z" fill="#666" /><path d="M106 106L113 113H106Z" fill="#666" />
        <path d="M124 116H139L131.500 126ZM282 116H297L289.500 126Z" fill="#666" />
        <path fill-rule="evenodd" d="M176 108H204V136H182L176 130ZM182 110V120H198V110ZM185 126V136H195V126Z" fill="#666" /><path d="M190 110H193V117H190ZM189 130H192V136H189Z" fill="#666" />
        <path d="M254 112L245 120L254 128M246 120Q268 118 267 134" fill="none" stroke="#666" stroke-width="3.600" />
        <path d="M336 112L345 120L336 128M344 120Q322 118 323 134" fill="none" stroke="#999" stroke-width="3.600" /><path d="M360 116H375L367.500 126Z" fill="#8a8a8a" />
      </svg>
      <div class="tab active">
        {@render cubeTab('#666', '#b0b2b2', '#666')}<span use:fit={280}>water_bottle_sketch v1*</span>
        <svg class="close" width="18" height="18" viewBox="0 0 18 18"><path d="M1 1L17 17M17 1L1 17" stroke="#7a7a7a" stroke-width="2.200" /></svg>
      </div>
      <div class="tab idle">
        {@render cubeTab('#919191', '#bdbdbd', '#919191')}<span use:fit={193}>pencil_sketch v1</span>
        <svg class="close" width="18" height="18" viewBox="0 0 18 18"><path d="M1 1L17 17M17 1L1 17" stroke="#7a7a7a" stroke-width="2.200" /></svg>
      </div>
      <div class="newtab"><svg width="26" height="26" viewBox="0 0 26 26"><path d="M13 0V26M0 13H26" stroke="#808080" stroke-width="5.500" /></svg></div>
      <svg class="account" width="270" height="64" viewBox="2530 90 270 64">
        <circle cx="2558" cy="122" r="16" fill="#666" /><path d="M2566 107L2557 119M2573 114L2563 125M2553 118L2564 129L2558 132Q2551 130 2552 122Z" stroke="#ccc" stroke-width="3.400" fill="#ccc" /><path d="M2556 129L2546 138" stroke="#ccc" stroke-width="4" />
        <circle cx="2624" cy="122" r="14.800" fill="none" stroke="#666" stroke-width="2.400" /><circle cx="2624" cy="122" r="11.500" fill="#666" /><path d="M2624 114V123H2632" fill="none" stroke="#ddd" stroke-width="2.400" />
        <path d="M2677 132Q2682 127 2682 117Q2683 110 2691 109T2699 117Q2700 127 2704 132ZM2686 134H2695Q2691 140 2686 134ZM2689 106H2692V110H2689Z" fill="#666" /><circle cx="2699" cy="114" r="7" fill="#0696d7" stroke="#ccc" />
        <circle cx="2756" cy="122" r="16" fill="#666" /><path d="M2750 118Q2750 112 2756 112T2762 118Q2762 121 2757 123V127" fill="none" stroke="#ddd" stroke-width="3.600" /><rect x="2754.500" y="130" width="4" height="4" fill="#ddd" />
      </svg>
      <span class="avatar">OS</span>
    </div>

    <div class="ribbon">
      <button class="design"><b use:fit={84}>DESIGN</b>{@render caret('#333')}</button>
      <div class="ribbon-main">
        <nav class="ribbon-tabs">
          {#each ribbonTabs as r}<span class:on={r.on} style:margin-left={r.gap + 'px'} use:fit={r.w}>{r.t}</span>{/each}
        </nav>
        <div class="underline"></div>
        <div class="groups">
          {#each groups as g, i}
            <section class="group" style:width={g.w + 'px'}>
              <div class="icons" class:last={i === 6}>
                <svg width={g.w - 2} height="66" viewBox={`${g.x} 207 ${g.w - 2} 66`}>
                  {#if i === 0}{@render createIcons()}
                  {:else if i === 1}{@render modifyIcons()}
                  {:else if i === 2}{@render assembleIcons()}
                  {:else if i === 3}{@render constructIcons()}
                  {:else if i === 4}{@render inspectIcons()}
                  {:else if i === 5}{@render insertIcons()}
                  {:else}{@render selectIcons()}{/if}
                </svg>
                <div class="group-label" style:padding-left={g.gap + 'px'}><span use:fit={g.lw}>{g.t}</span>{@render caret('#333')}</div>
              </div>
            </section>
          {/each}
        </div>
      </div>
    </div>

    <div class="canvas">
      <svg class="scene" width="2880" height="1258" viewBox="0 318 2880 1258">
        <g fill="none" stroke="#ededed" stroke-width="2"><circle cx="1441" cy="947" r="420" /><path d="M1441 423V527M1441 1366V1470M917 947H1021M1861 947H1965" /></g>
        <g transform="translate(1160 740) scale(.33333)">
          <path d="M60 364L232 114H385Q402 108 415 90H962L952 114L1110 121L940 368Z" fill="#cbcbcb" />
          <path d="M255 372L160 519A442 442 0 0 0 495 1249A442 442 0 0 0 875 1033L990 890L670 561Z" fill="url(#body)" />
          <path d="M160 519A442 442 0 0 0 495 1249A442 442 0 0 0 875 1033" fill="none" stroke="#35352f" stroke-width="6" />
          <circle cx="670" cy="561" r="446" fill="url(#lip)" />
          <circle cx="673" cy="560" r="398" fill="none" stroke="url(#shine)" stroke-width="16" filter="url(#soft)" />
          <circle cx="672" cy="560" r="418" fill="none" stroke="#4d4b45" stroke-width="30" opacity=".35" filter="url(#soft)" />
          <circle cx="670" cy="561" r="445" fill="none" stroke="#2a2a26" stroke-width="6" />
          <circle cx="675" cy="557" r="387" fill="#929591" stroke="#1c1c1a" stroke-width="6" />
          <circle cx="673" cy="557" r="334" fill="url(#lip)" />
          <circle cx="676" cy="552" r="312" fill="none" stroke="url(#shine)" stroke-width="16" filter="url(#soft)" />
          <circle cx="673" cy="557" r="334" fill="none" stroke="#1c1c1a" stroke-width="6" />
          <circle cx="683" cy="545" r="283" fill="#85837c" stroke="#1c1c1a" stroke-width="6" stroke-dasharray="26 3" />
          <path d="M415 470Q400 740 640 815Q820 820 910 690" fill="none" stroke="#b9b6ae" stroke-width="14" /><circle cx="686" cy="540" r="268" fill="none" stroke="#222" stroke-width="5" />
          <g clip-path="url(#hole)">
            <circle cx="691" cy="529" r="250" fill="url(#wall)" />
            <path d="M470 420Q560 300 700 305Q920 330 928 560" fill="none" stroke="#222" stroke-width="5" />
            <path d="M400 407Q560 395 690 465Q850 560 890 720L700 850L380 700Z" fill="#887f73" />
            <path d="M400 440Q560 430 670 500Q815 590 862 740L700 850L380 700Z" fill="#8e9089" />
            <path d="M400 482Q540 470 640 520Q800 600 824 780L700 850L380 700Z" fill="#878985" />
            <g fill="none"><path d="M400 407Q560 395 690 465Q850 560 890 720M400 482Q540 470 640 520Q800 600 824 780" stroke="#1c1c1a" stroke-width="6" /><path d="M400 448Q560 438 670 506Q815 595 860 740" stroke="#66635b" stroke-width="14" filter="url(#soft)" /></g>
            <path d="M845 490V620M725 620H930" stroke="#777" stroke-width="3" opacity=".25" />
          </g>
          <circle cx="691" cy="529" r="251" fill="none" stroke="#151515" stroke-width="11" />
        </g>
        <ellipse cx="2770" cy="376" rx="54" ry="7" fill="#666" opacity=".6" filter="url(#haze)" />
        <g filter="url(#soft1)">
          <rect x="2724" y="381" width="92" height="92" fill="url(#cubeface)" /><rect x="2723.500" y="381" width="93" height="92" fill="none" stroke="#c4c4c4" stroke-width="1.600" stroke-dasharray="17 9" />
          <rect x="2741" y="398" width="58" height="58" fill="#dcdee1" />
          <text x="2769" y="426" class="cube-text" textLength="50" lengthAdjust="spacingAndGlyphs" transform="rotate(180 2769 426)" dy="9">BACK</text>
          <path d="M2723 372V388" stroke="#4ade4a" stroke-width="3" /><path d="M2726 474V490" stroke="#a0a0ff" stroke-width="4" />
          <text x="2722" y="379" class="axis" fill="#7cf07c" stroke="#7cf07c">Y</text><text x="2824" y="407" class="axis" fill="#ff8c8c" stroke="#ff8c8c">X</text><text x="2725" y="505" class="axis" fill="#8c8cff" stroke="#8c8cff">Z</text>
        </g>
      </svg>

      <aside class="browser">
        <div class="panel-head">
          <svg class="rewind" width="19" height="12" viewBox="0 0 19 12"><path d="M10 0V12L0 6ZM19 0V12L9 6Z" fill="#222" /></svg>
          <span use:fit={101}>BROWSER</span>
          <svg class="fold" width="40" height="24" viewBox="569 339 40 24"><rect x="569" y="343" width="16" height="16" rx="5" fill="#2f2f2f" /><path d="M571 351H583" stroke="#ddd" stroke-width="1.600" /><path d="M601 340V362M606 344V358" stroke="#8a8a8a" stroke-width="1.600" /></svg>
        </div>
        <div class="tree">
          <div class="row root">
            <svg class="open-arrow" width="16" height="16" viewBox="0 0 16 16"><path d="M1 15L15 1V15Z" fill="#777" stroke="#111" stroke-width="1.800" /></svg>
            <div class="chip rootchip">
              {@render rowIcon('eye')}
              <div class="picked">
                <svg width="27" height="27" viewBox="0 0 27 27"><path d="M1 5L6 1H26V20L21 26H1Z" fill="url(#steel)" stroke="#333" stroke-width="1.400" /><path d="M21 5L26 1V20L21 26Z" fill="#9da3b0" /><path d="M1 5H21V26" fill="none" stroke="#eee" /></svg>
                <b use:fit={261}>water_bottle_sketch v1</b>
              </div>
              <svg class="radio" width="28" height="28" viewBox="0 0 28 28"><circle cx="14" cy="14" r="12.500" fill="url(#steel)" stroke="#777" stroke-width="1.400" /><circle cx="14" cy="14" r="4.800" fill="#222" /></svg>
            </div>
          </div>
          {#each tree as n}
            <div class="row" class:deep={!n.arrow}>
              {#if n.arrow === 'closed'}<svg class="twisty" width="14" height="20" viewBox="0 0 14 20"><path d="M1 1H4L12 10L4 19H1Z" fill="#fff" stroke="#222" stroke-width="1.500" /></svg>
              {:else if n.arrow === 'open'}<svg class="twisty" width="16" height="16" viewBox="1 0 16 16"><path d="M1 15L15 1V15Z" fill="#666" stroke="#111" stroke-width="1.800" /></svg>{/if}
              <div class="chip" style:width={n.w + 'px'}>
                {#each n.icons as k}{@render rowIcon(k)}{/each}
                <span use:fit={n.tw}>{n.t}</span>
              </div>
            </div>
          {/each}
        </div>
      </aside>

      <div class="panel-head comments">
        <span use:fit={125}>COMMENTS</span>
        <svg class="fold" width="40" height="24" viewBox="569 339 40 24"><rect x="569" y="343" width="16" height="16" rx="5" fill="#2f2f2f" /><path d="M571 351H583M577 345V357" stroke="#ddd" stroke-width="1.600" /><path d="M601 340V362M606 344V358" stroke="#8a8a8a" stroke-width="1.600" /></svg>
      </div>

      <div class="navbar">
        <svg width="474" height="48" viewBox="1204 1520 474 48">
          <rect x="1204" y="1520" width="66" height="48" fill="#0696d7" />
          <g class="hair" transform="translate(1200 1510) scale(.33333)">
            <path d="M72 92C20 98 25 119 75 119C130 119 140 98 88 92" fill="none" stroke="#333" /><path d="M48 116L62 106V126Z" fill="#333" /><path d="M72 142V74H62L80 54L98 74H89V142Z" fill="#f4f4f4" stroke="#444" />
            <path d="M157 90H191L174 114Z" fill="#fff" /><path d="M823 90H857L840 114ZM1003 90H1037L1020 114ZM1189 90H1223L1206 114ZM1375 90H1409L1392 114Z" fill="#333" />
            <path d="M236 82L256 64L262 76L296 67V82Z" fill="#9aa0aa" stroke="#444" /><rect x="235" y="84" width="82" height="56" fill="#fafafa" stroke="#444" /><rect x="248" y="97" width="56" height="31" fill="#b3b6bd" stroke="#555" />
            <path d="M410 128L390 104Q387 96 396 99L414 110L407 68Q410 60 416 67L426 98L429 60Q434 50 440 60L440 97L452 65Q459 58 463 66L454 102L466 80Q474 74 476 82L464 124L455 142H420Z" fill="#f6f6f8" stroke="#555" />
            <circle cx="576" cy="87" r="31" fill="#eef8f6" stroke="#444" /><path d="M612 68H632M622 56V78M612 84H632" stroke="#555" /><path d="M602 110L630 138" class="grip" stroke="#333b4a" />
            <rect x="700" y="58" width="88" height="88" fill="none" stroke="#888" stroke-dasharray="8 3" class="thin" /><circle cx="732" cy="90" r="31" fill="#eef8f6" stroke="#444" /><path d="M758 113L786 141" class="grip" stroke="#333" />
            <path d="M932 125H952V133L966 142H918L932 133Z" fill="#ccc" stroke="#555" /><rect x="898" y="56" width="88" height="69" fill="#fafafa" stroke="#444" /><rect x="907" y="64" width="70" height="52" fill="#9ebde2" stroke="#1c3f78" />
            <rect x="1084" y="58" width="85" height="85" fill="url(#steel)" stroke="#333" /><path d="M1096 58V143M1108 58V143M1120 58V143M1132 58V143M1144 58V143M1156 58V143M1084 70H1169M1084 82H1169M1084 94H1169M1084 106H1169M1084 118H1169M1084 130H1169" class="thin" stroke="#666" />
            <rect x="1270" y="64" width="85" height="73" fill="#bfd4ee" stroke="#1c3a6c" /><path d="M1312 64V137M1270 100H1355" stroke="#1c3a6c" /><path d="M1277 71H1305V94H1277ZM1319 71H1348V94H1319ZM1277 107H1305V130H1277ZM1319 107H1348V130H1319Z" fill="#9ebde2" stroke="#5d84b8" class="thin" />
          </g>
        </svg>
      </div>
    </div>

    <footer class="timeline">
      <svg width="420" height="98" viewBox="0 1578 420 98">
        <g fill="#4d4d4d"><path d="M24 1612H28V1640H24ZM48 1612V1640L29 1626ZM73 1626L92 1612V1640ZM94 1620H98V1632H94ZM124 1610L148 1626L124 1642ZM172 1620H176V1632H172ZM178 1612L197 1626L178 1640ZM224 1612L243 1626L224 1640ZM244 1612H248V1640H244Z" /></g>
        <g transform="translate(294 1608)">{@render sketchArt()}</g>
        <g class="fine" transform="translate(342 1610) scale(.1722 .1667) translate(-575 -62)">{@render revolveArt()}</g>
        <path d="M312 1646V1658H358V1646" fill="none" stroke="#c2c2c2" stroke-width="4" />
        <path d="M370 1596H394V1604L384 1614V1660H380V1614L370 1604Z" fill="#636363" />
      </svg>
      <svg width="70" height="98" viewBox="-28 -48 70 98">{@render gear('#999')}</svg>
    </footer>
  </main>

  <div class="under"><span class="blue"></span><span class="darkred"></span><span class="pink"></span><b use:fit={349}>Bryson DeChambeau Drives</b></div>

  <div class="dock">
    {#each apps as name}
      <svg width="89.500" height="108" viewBox="-44.750 -51 89.500 108">{@render app(name)}{#if running.includes(name)}<circle cy="49" r="4" fill="#05070a" />{/if}</svg>
    {/each}
    <div class="divider"></div>
    <svg width="89.500" height="108" viewBox="-44.750 -51 89.500 108">
      <rect x="-28" y="-41" width="56" height="50" fill="#f4f4f4" /><rect x="20" y="-26" width="12" height="42" fill="#eee" /><rect x="-29" y="-33" width="57" height="73" fill="#fcfcfc" stroke="#ddd" />
      <path d="M-30-28V36" stroke="#111" stroke-width="5" stroke-dasharray="4 3" /><path d="M-8-33L0-37L8-33Z" fill="#b02030" /><rect x="-15" y="-3" width="27" height="26" fill="#171717" /><path d="M-4 18L0 2L6 6L3 18Z" fill="#777" />
      <path d="M-8-17H8M-22-14H20" stroke="#333" stroke-width="2" /><path d="M-8-9H8M-6-6H6M-24 26H20M-24 29H0" stroke="#bbb" /><path d="M8-33L27-33V-5Q24-18 8-26Z" fill="#d8d8d8" /><path d="M6-33Q10-16 27-5L20-14Q14-20 13-33Z" fill="#fff" />
    </svg>
    <svg width="89.500" height="108" viewBox="-44.750 -51 89.500 108">
      <path d="M-28-31Q-28-34-25-34H-14L-11-30H26Q29-30 29-27V0H-28Z" fill="#7fd0f6" /><path d="M-32-24H-12L-9-20H32V0H-35V-20Q-35-24-32-24Z" fill="#8bd7fa" /><path d="M-35-18H34L36-14V30Q36 32 34 32H-34Q-36 32-36 30Z" fill="#6cc6f2" /><path d="M-36 27H36V31H-36Z" fill="#56b2e2" />
    </svg>
    <svg width="89.500" height="108" viewBox="-44.750 -51 89.500 108">
      <path d="M-26-34L-14-41L-6-36L4-41L14-38L26-30L20-22H-22Z" fill="#e9e9e9" stroke="#777" /><path d="M-14-34L-8-28L-18-26ZM6-36L16-30L4-26Z" fill="#3c4450" /><path d="M-6-34L2-32L-2-27Z" fill="#3cb8d0" /><path d="M10-28L18-30L15-25Z" fill="#c86440" />
      <path d="M-30-33Q0-15 30-33L24 28Q22 37 0 37T-22 28Z" fill="#dfe0e1" opacity=".94" /><ellipse cy="-33" rx="30" ry="7" fill="none" stroke="#e9eaea" stroke-width="2" /><path d="M-18-14L-12 28M16-16L10 26" stroke="#fafafa" stroke-width="5" opacity=".6" />
    </svg>
  </div>
</div>

<style>
  :global(body) { margin: 0; background: #0c1828; }
  svg { display: block; flex: none; }
  .defs { position: absolute; }
  .desktop {
    width: 2880px; height: 1800px; overflow: hidden; display: flex; flex-direction: column; align-items: flex-start;
    font-family: 'Noto Sans', sans-serif; font-size: 22px; color: #3c3c3c;
    background: linear-gradient(90deg, #0c2038 0, #1a2b40 200px, #3c3b3a 215px, #45423e 420px, #1c1a1a 560px, #0a0a0e 690px, #0a1730 710px, #0c1a30 960px, #050c18 1200px, #070c18 1590px, #4c3a52 1600px, #6a3550 1700px, #3a1c3c 1770px, #060b18 1790px, #020612 2200px, #0b1832 2500px, #1a3260 2800px, #152a50 2880px);
  }
  span, b { white-space: nowrap; flex: none; }
  .hair :global(*) { vector-effect: non-scaling-stroke; stroke-width: 2; }
  .fine :global(*) { vector-effect: non-scaling-stroke; stroke-width: 1.2; }
  .hair .grip { stroke-width: 4.500; }
  .hair .thin { stroke-width: 1; }
  .a { font-family: Inter, sans-serif; }
  .mid { text-anchor: middle; }

  .menubar {
    box-sizing: border-box; width: 2880px; height: 45px; padding-left: 40px; border-bottom: 1px solid #35474e; display: flex; align-items: center;
    font: 28px/44px Inter, sans-serif; color: #2c3638;
    background: linear-gradient(90deg, #dfe9e7 0, #e3ebe9 500px, #dcf0f1 960px, #d6edf2 1500px, #cfe6ee 1800px, #d5eaf0 2100px, #c0d2da 2250px, #b5c1cc 2380px, #b9c6cf 2550px, #c8dfe4 2680px, #c5d6d0 2800px, #c4d0c6 2880px);
  }
  .menu.bold { font-weight: 700; }
  .status { margin-left: 980px; }
  .pct { margin-left: 7px; font-size: 23px; }
  .battery { margin-left: 2px; }
  .clock { margin-left: 28px; color: #10191d; }
  .user { margin-left: 24px; font-weight: 500; color: #10191d; }
  .tools { margin-left: 22px; }

  .window { width: 2880px; height: 1631px; box-sizing: border-box; border-left: 2px solid #b4b4b4; border-radius: 12px; overflow: hidden; background: #fff; display: flex; flex-direction: column; flex: none; }
  .titlebar { height: 43px; border-bottom: 2px solid #ababab; background: linear-gradient(#ececec, #e0e0e0 20%, #cecece); display: flex; align-items: center; flex: none; }
  .lights { display: flex; gap: 16px; padding: 2px 0 0 16px; width: 1155px; margin-right: 15px; }
  .lights i { width: 22px; height: 22px; border-radius: 50%; border: 1px solid; }
  .red { background: #fc5f57; border-color: #e2463f; }
  .amber { background: #fdbc40; border-color: #dfa023; }
  .green { background: #2bc840; border-color: #1dad2b; }
  .title { font: 25.500px/43px Inter, sans-serif; color: #4a4a4a; padding-top: 4px; }

  .tabbar { height: 64px; background: #ccc; display: flex; align-items: flex-end; flex: none; }
  .tabbar > svg:first-child { margin-left: -2px; width: 390px; }
  .tab { box-sizing: border-box; width: 1028px; height: 56px; border-radius: 8px 8px 0 0; display: flex; align-items: center; font-size: 24px; }
  .active { background: #f2f2f2; padding-left: 340px; }
  .idle { background: #bababa; color: #6a6a6a; margin-left: 8px; padding-left: 384px; }
  .tab-cube { margin-right: 9px; }
  .close { margin-left: auto; margin-right: 13px; }
  .newtab { box-sizing: border-box; width: 56px; height: 56px; margin-left: 8px; padding-left: 2px; background: #bababa; border-radius: 8px 8px 0 0; display: flex; align-items: center; justify-content: center; }
  .account { margin-left: 12px; }
  .avatar { width: 50px; height: 50px; border-radius: 50%; background: #ececec; margin: 0 0 7px 9px; text-align: center; line-height: 50px; font-size: 24px; letter-spacing: -0.500px; }

  .ribbon { height: 162px; background: #f2f2f2; border-bottom: 2px solid #ccc; display: flex; flex: none; }
  .design { box-sizing: border-box; width: 220px; height: 122px; margin: 21px 15px 0 23px; padding: 0 0 2px; border: 2px solid #ccc; border-radius: 8px; background: #f2f2f2; display: flex; align-items: center; justify-content: center; font: 600 22px 'Noto Sans', sans-serif; color: #333; }
  .design b { font-weight: 600; }
  .caret { margin-left: 5px; }
  .design .caret { margin-left: 9px; }
  .ribbon-tabs { height: 41px; display: flex; line-height: 44px; }
  .ribbon-tabs .on { font-weight: 700; color: #0696d7; }
  .underline { width: 116px; height: 6px; margin-left: 19px; background: #0696d7; }
  .groups { display: flex; padding-top: 6px; }
  .icons { height: 102px; border-right: 2px solid #ccc; }
  .last { border-right-color: transparent; }
  .group-label { display: flex; align-items: center; height: 32px; line-height: 32px; margin-top: 6px; }

  .canvas { height: 1258px; display: grid; grid-template: 1200px 1fr / 1fr; position: relative; border-bottom: 2px solid #ddd; flex: none; }
  .scene { position: absolute; left: -2px; top: 0; }
  .cube-text { font: 700 24px 'Liberation Sans', sans-serif; fill: #9a9ea6; text-anchor: middle; }
  .axis { font: 25px 'Liberation Sans', sans-serif; text-anchor: middle; stroke-width: 1; }
  .browser { position: relative; padding: 8px 0 0 8px; }
  .panel-head { box-sizing: border-box; width: 599px; height: 49px; border: 1px solid #ccc; border-right-width: 2px; border-bottom-width: 3px; background: #f2f2f2; display: flex; align-items: center; color: #5a5a5a; }
  .rewind { margin: 0 21px 0 9px; }
  .fold { margin-left: auto; margin-right: -2px; }
  .comments { position: relative; margin-left: 8px; padding-left: 49px; border-top: none; }
  .tree { margin-top: 11px; }
  .row { height: 40px; margin-bottom: 8px; padding-left: 74px; display: flex; align-items: center; }
  .root { padding-left: 35px; }
  .deep { padding-left: 144px; }
  .twisty { width: 14px; margin-right: 20px; }
  .open-arrow { margin-left: 1px; margin-right: 20px; }
  .chip { box-sizing: border-box; height: 40px; background: #f2f2f2; display: flex; align-items: center; padding-left: 6px; }
  .deep .chip { margin-left: 0; }
  .rootchip { width: 448px; }
  .row-icon { margin-right: 18px; }
  .chip > span { margin-left: 9.500px; }
  .rootchip .row-icon { margin-right: 12px; }
  .picked { width: 348px; height: 32px; background: #999; color: #fff; display: flex; align-items: center; box-sizing: border-box; padding-left: 9px; }
  .picked b { margin-left: 30px; font-weight: 700; }
  .radio { margin-left: 8px; }
  .navbar { position: absolute; left: 1202px; top: 1202px; background: #f2f2f2; }
  .timeline { height: 98px; background: linear-gradient(#f2f2f2, #efefef 50%, #e5e5e5); display: flex; justify-content: space-between; flex: none; }
  .timeline > svg:first-child { margin-left: -2px; }

  .under { width: 2872px; height: 4px; margin-left: 4px; background: #a8a8a8; overflow: hidden; display: flex; line-height: 4px; border-radius: 0 0 8px 8px; flex: none; }
  .under .blue { width: 139px; margin-left: 1525px; border: solid #154f9c; border-width: 0 2px; }
  .under .darkred { width: 220px; margin-left: 24px; background: #8d0505; }
  .under .pink { width: 70px; margin-left: 173px; background: #b03850; }
  .under b { margin-left: 165px; font: 700 28px/5px Inter, sans-serif; color: #111; }

  .dock {
    box-sizing: border-box; width: 2736px; height: 108px; margin: 12px 0 0 72px; padding-left: 5px; border-radius: 9px 9px 0 0; display: flex; flex: none;
    background: linear-gradient(90deg, #50688c 0, #596a84 100px, #85837f 220px, #8f8b81 330px, #7e7a70 560px, #636874 670px, #55648c 850px, #54688f 1000px, #4c5a6a 1180px, #4d5c70 1400px, #58607e 1550px, #a3709c 1650px, #8c6892 1700px, #50597a 1780px, #4c5870 2200px, #53648c 2450px, #526b98 2736px);
  }
  .divider { width: 2px; height: 80px; margin: 14px 19.500px 0 19px; background: #2c3d5f; flex: none; }
</style>
